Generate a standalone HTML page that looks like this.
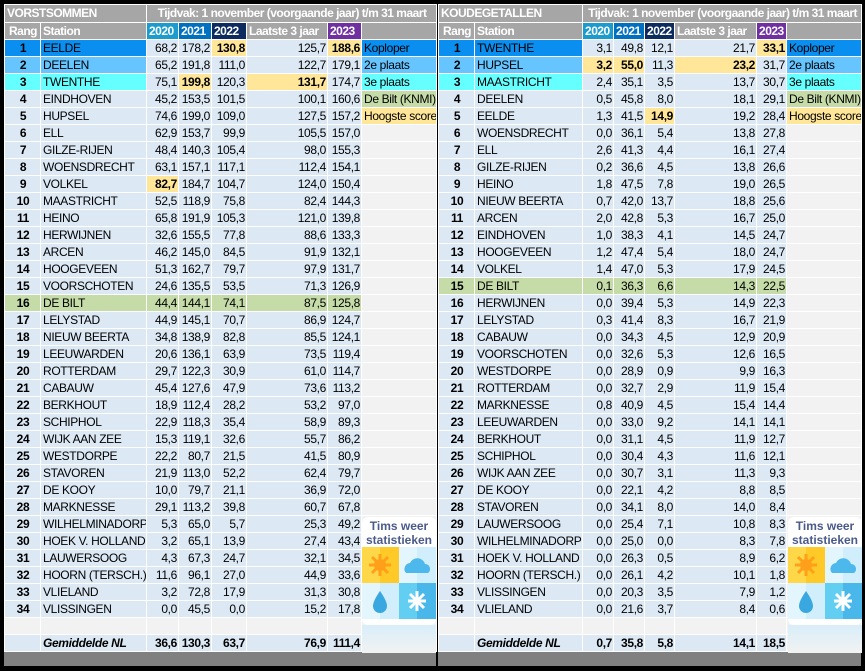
<!DOCTYPE html>
<html><head><meta charset="utf-8"><style>
*{margin:0;padding:0;box-sizing:border-box}
body{width:865px;height:671px;background:#000;position:relative;overflow:hidden;font-family:"Liberation Sans",Arial,sans-serif;font-size:12px;letter-spacing:-0.35px;color:#000}
.panel{position:absolute;top:4px;background:#808080;height:662px}
table{border-collapse:collapse;table-layout:fixed}
td{height:17px;border:1px solid #fff;background:#dce9f5;padding:0 1px 0 2px;white-space:nowrap;overflow:hidden;line-height:15px}
td.n{text-align:right}
td.r{text-align:center;font-weight:bold}
td.l{background:#f2f2f2;padding-left:2px}
tr.h1 td{background:#a6a6a6;color:#fff;font-weight:bold;height:18px;letter-spacing:-0.5px}
tr.h2 td{background:#a6a6a6;color:#fff;font-weight:bold;letter-spacing:-0.5px}
tr.h2 td.y0{background:#1b9ccc}
tr.h2 td.y1{background:#0070c0}
tr.h2 td.y2{background:#0d2b5e}
tr.h2 td.y3{background:#7030a0}
.b{background:#ffe699!important;font-weight:bold}
tr.k1 td.c{background:#0a8ef0}
tr.k2 td.c{background:#66c4ff}
tr.k3 td.c{background:#66ffff}
tr.g td.c{background:#c5dca8}
.lk1{background:#0a8ef0!important}.lk2{background:#66c4ff!important}.lk3{background:#66ffff!important}.lkn{background:#c5dca8!important}.lkh{background:#ffe699!important}
tr.gem td{font-weight:bold}
tr.gem td.s{font-style:italic}
.logo{position:absolute;width:74px;height:108px;background:#fff;border-radius:6px;overflow:hidden}
.logo .t{color:#4a5a8a;font-size:12px;font-weight:bold;text-align:center;line-height:14px;padding-top:2px;letter-spacing:0}
.tiles{position:absolute;left:0;top:30px;width:74px;height:72px}
.ref{position:absolute;width:74px;height:28px;overflow:hidden}
</style></head><body>

<div class="panel" style="left:4px;width:432px">
<table style="width:432px">
<colgroup><col style="width:36px"><col style="width:106px"><col style="width:32px"><col style="width:33px"><col style="width:35px"><col style="width:81px"><col style="width:34px"><col style="width:75px"></colgroup>
<tr class="h1"><td colspan="2">VORSTSOMMEN</td><td colspan="6" style="text-align:center">Tijdvak: 1 november (voorgaande jaar) t/m 31 maart</td></tr>
<tr class="h2"><td style="text-align:center">Rang</td><td>Station</td><td class="y0">2020</td><td class="y1">2021</td><td class="y2">2022</td><td>Laatste 3 jaar</td><td class="y3">2023</td><td></td></tr>
<tr class="k1"><td class="r c">1</td><td class="c">EELDE</td><td class="n">68,2</td><td class="n">178,2</td><td class="n b">130,8</td><td class="n">125,7</td><td class="n b">188,6</td><td class="l lk1">Koploper</td></tr>
<tr class="k2"><td class="r c">2</td><td class="c">DEELEN</td><td class="n">65,2</td><td class="n">191,8</td><td class="n">111,0</td><td class="n">122,7</td><td class="n">179,1</td><td class="l lk2">2e plaats</td></tr>
<tr class="k3"><td class="r c">3</td><td class="c">TWENTHE</td><td class="n">75,1</td><td class="n b">199,8</td><td class="n">120,3</td><td class="n b">131,7</td><td class="n">174,7</td><td class="l lk3">3e plaats</td></tr>
<tr><td class="r">4</td><td>EINDHOVEN</td><td class="n">45,2</td><td class="n">153,5</td><td class="n">101,5</td><td class="n">100,1</td><td class="n">160,6</td><td class="l lkn">De Bilt (KNMI)</td></tr>
<tr><td class="r">5</td><td>HUPSEL</td><td class="n">74,6</td><td class="n">199,0</td><td class="n">109,0</td><td class="n">127,5</td><td class="n">157,2</td><td class="l lkh">Hoogste score</td></tr>
<tr><td class="r">6</td><td>ELL</td><td class="n">62,9</td><td class="n">153,7</td><td class="n">99,9</td><td class="n">105,5</td><td class="n">157,0</td><td class="l"></td></tr>
<tr><td class="r">7</td><td>GILZE-RIJEN</td><td class="n">48,4</td><td class="n">140,3</td><td class="n">105,4</td><td class="n">98,0</td><td class="n">155,3</td><td class="l"></td></tr>
<tr><td class="r">8</td><td>WOENSDRECHT</td><td class="n">63,1</td><td class="n">157,1</td><td class="n">117,1</td><td class="n">112,4</td><td class="n">154,1</td><td class="l"></td></tr>
<tr><td class="r">9</td><td>VOLKEL</td><td class="n b">82,7</td><td class="n">184,7</td><td class="n">104,7</td><td class="n">124,0</td><td class="n">150,4</td><td class="l"></td></tr>
<tr><td class="r">10</td><td>MAASTRICHT</td><td class="n">52,5</td><td class="n">118,9</td><td class="n">75,8</td><td class="n">82,4</td><td class="n">144,3</td><td class="l"></td></tr>
<tr><td class="r">11</td><td>HEINO</td><td class="n">65,8</td><td class="n">191,9</td><td class="n">105,3</td><td class="n">121,0</td><td class="n">139,8</td><td class="l"></td></tr>
<tr><td class="r">12</td><td>HERWIJNEN</td><td class="n">32,6</td><td class="n">155,5</td><td class="n">77,8</td><td class="n">88,6</td><td class="n">133,3</td><td class="l"></td></tr>
<tr><td class="r">13</td><td>ARCEN</td><td class="n">46,2</td><td class="n">145,0</td><td class="n">84,5</td><td class="n">91,9</td><td class="n">132,1</td><td class="l"></td></tr>
<tr><td class="r">14</td><td>HOOGEVEEN</td><td class="n">51,3</td><td class="n">162,7</td><td class="n">79,7</td><td class="n">97,9</td><td class="n">131,7</td><td class="l"></td></tr>
<tr><td class="r">15</td><td>VOORSCHOTEN</td><td class="n">24,6</td><td class="n">135,5</td><td class="n">53,5</td><td class="n">71,3</td><td class="n">126,9</td><td class="l"></td></tr>
<tr class="g"><td class="r c">16</td><td class="c">DE BILT</td><td class="n c">44,4</td><td class="n c">144,1</td><td class="n c">74,1</td><td class="n c">87,5</td><td class="n c">125,8</td><td class="l"></td></tr>
<tr><td class="r">17</td><td>LELYSTAD</td><td class="n">44,9</td><td class="n">145,1</td><td class="n">70,7</td><td class="n">86,9</td><td class="n">124,7</td><td class="l"></td></tr>
<tr><td class="r">18</td><td>NIEUW BEERTA</td><td class="n">34,8</td><td class="n">138,9</td><td class="n">82,8</td><td class="n">85,5</td><td class="n">124,1</td><td class="l"></td></tr>
<tr><td class="r">19</td><td>LEEUWARDEN</td><td class="n">20,6</td><td class="n">136,1</td><td class="n">63,9</td><td class="n">73,5</td><td class="n">119,4</td><td class="l"></td></tr>
<tr><td class="r">20</td><td>ROTTERDAM</td><td class="n">29,7</td><td class="n">122,3</td><td class="n">30,9</td><td class="n">61,0</td><td class="n">114,7</td><td class="l"></td></tr>
<tr><td class="r">21</td><td>CABAUW</td><td class="n">45,4</td><td class="n">127,6</td><td class="n">47,9</td><td class="n">73,6</td><td class="n">113,2</td><td class="l"></td></tr>
<tr><td class="r">22</td><td>BERKHOUT</td><td class="n">18,9</td><td class="n">112,4</td><td class="n">28,2</td><td class="n">53,2</td><td class="n">97,0</td><td class="l"></td></tr>
<tr><td class="r">23</td><td>SCHIPHOL</td><td class="n">22,9</td><td class="n">118,3</td><td class="n">35,4</td><td class="n">58,9</td><td class="n">89,3</td><td class="l"></td></tr>
<tr><td class="r">24</td><td>WIJK AAN ZEE</td><td class="n">15,3</td><td class="n">119,1</td><td class="n">32,6</td><td class="n">55,7</td><td class="n">86,2</td><td class="l"></td></tr>
<tr><td class="r">25</td><td>WESTDORPE</td><td class="n">22,2</td><td class="n">80,7</td><td class="n">21,5</td><td class="n">41,5</td><td class="n">80,9</td><td class="l"></td></tr>
<tr><td class="r">26</td><td>STAVOREN</td><td class="n">21,9</td><td class="n">113,0</td><td class="n">52,2</td><td class="n">62,4</td><td class="n">79,7</td><td class="l"></td></tr>
<tr><td class="r">27</td><td>DE KOOY</td><td class="n">10,0</td><td class="n">79,7</td><td class="n">21,1</td><td class="n">36,9</td><td class="n">72,0</td><td class="l"></td></tr>
<tr><td class="r">28</td><td>MARKNESSE</td><td class="n">29,1</td><td class="n">113,2</td><td class="n">39,8</td><td class="n">60,7</td><td class="n">67,8</td><td class="l"></td></tr>
<tr><td class="r">29</td><td>WILHELMINADORP</td><td class="n">5,3</td><td class="n">65,0</td><td class="n">5,7</td><td class="n">25,3</td><td class="n">49,2</td><td class="l"></td></tr>
<tr><td class="r">30</td><td>HOEK V. HOLLAND</td><td class="n">3,2</td><td class="n">65,1</td><td class="n">13,9</td><td class="n">27,4</td><td class="n">43,4</td><td class="l"></td></tr>
<tr><td class="r">31</td><td>LAUWERSOOG</td><td class="n">4,3</td><td class="n">67,3</td><td class="n">24,7</td><td class="n">32,1</td><td class="n">34,5</td><td class="l"></td></tr>
<tr><td class="r">32</td><td>HOORN (TERSCH.)</td><td class="n">11,6</td><td class="n">96,1</td><td class="n">27,0</td><td class="n">44,9</td><td class="n">33,6</td><td class="l"></td></tr>
<tr><td class="r">33</td><td>VLIELAND</td><td class="n">3,2</td><td class="n">72,8</td><td class="n">17,9</td><td class="n">31,3</td><td class="n">30,8</td><td class="l"></td></tr>
<tr><td class="r">34</td><td>VLISSINGEN</td><td class="n">0,0</td><td class="n">45,5</td><td class="n">0,0</td><td class="n">15,2</td><td class="n">17,8</td><td class="l"></td></tr>
<tr><td class="l"></td><td class="l"></td><td class="l"></td><td class="l"></td><td class="l"></td><td class="l"></td><td class="l"></td><td class="l"></td></tr>
<tr class="gem"><td></td><td class="s">Gemiddelde NL</td><td class="n">36,6</td><td class="n">130,3</td><td class="n">63,7</td><td class="n">76,9</td><td class="n">111,4</td><td class="l"></td></tr>
</table>
</div>

<div class="panel" style="left:438px;width:423px">
<table style="width:423px">
<colgroup><col style="width:36px"><col style="width:108px"><col style="width:31px"><col style="width:31px"><col style="width:30px"><col style="width:82px"><col style="width:30px"><col style="width:75px"></colgroup>
<tr class="h1"><td colspan="2">KOUDEGETALLEN</td><td colspan="6" style="text-align:center">Tijdvak: 1 november (voorgaande jaar) t/m 31 maart</td></tr>
<tr class="h2"><td style="text-align:center">Rang</td><td>Station</td><td class="y0">2020</td><td class="y1">2021</td><td class="y2">2022</td><td>Laatste 3 jaar</td><td class="y3">2023</td><td></td></tr>
<tr class="k1"><td class="r c">1</td><td class="c">TWENTHE</td><td class="n">3,1</td><td class="n">49,8</td><td class="n">12,1</td><td class="n">21,7</td><td class="n b">33,1</td><td class="l lk1">Koploper</td></tr>
<tr class="k2"><td class="r c">2</td><td class="c">HUPSEL</td><td class="n b">3,2</td><td class="n b">55,0</td><td class="n">11,3</td><td class="n b">23,2</td><td class="n">31,7</td><td class="l lk2">2e plaats</td></tr>
<tr class="k3"><td class="r c">3</td><td class="c">MAASTRICHT</td><td class="n">2,4</td><td class="n">35,1</td><td class="n">3,5</td><td class="n">13,7</td><td class="n">30,7</td><td class="l lk3">3e plaats</td></tr>
<tr><td class="r">4</td><td>DEELEN</td><td class="n">0,5</td><td class="n">45,8</td><td class="n">8,0</td><td class="n">18,1</td><td class="n">29,1</td><td class="l lkn">De Bilt (KNMI)</td></tr>
<tr><td class="r">5</td><td>EELDE</td><td class="n">1,3</td><td class="n">41,5</td><td class="n b">14,9</td><td class="n">19,2</td><td class="n">28,4</td><td class="l lkh">Hoogste score</td></tr>
<tr><td class="r">6</td><td>WOENSDRECHT</td><td class="n">0,0</td><td class="n">36,1</td><td class="n">5,4</td><td class="n">13,8</td><td class="n">27,8</td><td class="l"></td></tr>
<tr><td class="r">7</td><td>ELL</td><td class="n">2,6</td><td class="n">41,3</td><td class="n">4,4</td><td class="n">16,1</td><td class="n">27,4</td><td class="l"></td></tr>
<tr><td class="r">8</td><td>GILZE-RIJEN</td><td class="n">0,2</td><td class="n">36,6</td><td class="n">4,5</td><td class="n">13,8</td><td class="n">26,6</td><td class="l"></td></tr>
<tr><td class="r">9</td><td>HEINO</td><td class="n">1,8</td><td class="n">47,5</td><td class="n">7,8</td><td class="n">19,0</td><td class="n">26,5</td><td class="l"></td></tr>
<tr><td class="r">10</td><td>NIEUW BEERTA</td><td class="n">0,7</td><td class="n">42,0</td><td class="n">13,7</td><td class="n">18,8</td><td class="n">25,6</td><td class="l"></td></tr>
<tr><td class="r">11</td><td>ARCEN</td><td class="n">2,0</td><td class="n">42,8</td><td class="n">5,3</td><td class="n">16,7</td><td class="n">25,0</td><td class="l"></td></tr>
<tr><td class="r">12</td><td>EINDHOVEN</td><td class="n">1,0</td><td class="n">38,3</td><td class="n">4,1</td><td class="n">14,5</td><td class="n">24,7</td><td class="l"></td></tr>
<tr><td class="r">13</td><td>HOOGEVEEN</td><td class="n">1,2</td><td class="n">47,4</td><td class="n">5,4</td><td class="n">18,0</td><td class="n">24,7</td><td class="l"></td></tr>
<tr><td class="r">14</td><td>VOLKEL</td><td class="n">1,4</td><td class="n">47,0</td><td class="n">5,3</td><td class="n">17,9</td><td class="n">24,5</td><td class="l"></td></tr>
<tr class="g"><td class="r c">15</td><td class="c">DE BILT</td><td class="n c">0,1</td><td class="n c">36,3</td><td class="n c">6,6</td><td class="n c">14,3</td><td class="n c">22,5</td><td class="l"></td></tr>
<tr><td class="r">16</td><td>HERWIJNEN</td><td class="n">0,0</td><td class="n">39,4</td><td class="n">5,3</td><td class="n">14,9</td><td class="n">22,3</td><td class="l"></td></tr>
<tr><td class="r">17</td><td>LELYSTAD</td><td class="n">0,3</td><td class="n">41,4</td><td class="n">8,3</td><td class="n">16,7</td><td class="n">21,9</td><td class="l"></td></tr>
<tr><td class="r">18</td><td>CABAUW</td><td class="n">0,0</td><td class="n">34,3</td><td class="n">4,5</td><td class="n">12,9</td><td class="n">20,9</td><td class="l"></td></tr>
<tr><td class="r">19</td><td>VOORSCHOTEN</td><td class="n">0,0</td><td class="n">32,6</td><td class="n">5,3</td><td class="n">12,6</td><td class="n">16,5</td><td class="l"></td></tr>
<tr><td class="r">20</td><td>WESTDORPE</td><td class="n">0,0</td><td class="n">28,9</td><td class="n">0,9</td><td class="n">9,9</td><td class="n">16,3</td><td class="l"></td></tr>
<tr><td class="r">21</td><td>ROTTERDAM</td><td class="n">0,0</td><td class="n">32,7</td><td class="n">2,9</td><td class="n">11,9</td><td class="n">15,4</td><td class="l"></td></tr>
<tr><td class="r">22</td><td>MARKNESSE</td><td class="n">0,8</td><td class="n">40,9</td><td class="n">4,5</td><td class="n">15,4</td><td class="n">14,4</td><td class="l"></td></tr>
<tr><td class="r">23</td><td>LEEUWARDEN</td><td class="n">0,0</td><td class="n">33,0</td><td class="n">9,2</td><td class="n">14,1</td><td class="n">14,1</td><td class="l"></td></tr>
<tr><td class="r">24</td><td>BERKHOUT</td><td class="n">0,0</td><td class="n">31,1</td><td class="n">4,5</td><td class="n">11,9</td><td class="n">12,7</td><td class="l"></td></tr>
<tr><td class="r">25</td><td>SCHIPHOL</td><td class="n">0,0</td><td class="n">30,4</td><td class="n">4,3</td><td class="n">11,6</td><td class="n">12,1</td><td class="l"></td></tr>
<tr><td class="r">26</td><td>WIJK AAN ZEE</td><td class="n">0,0</td><td class="n">30,7</td><td class="n">3,1</td><td class="n">11,3</td><td class="n">9,3</td><td class="l"></td></tr>
<tr><td class="r">27</td><td>DE KOOY</td><td class="n">0,0</td><td class="n">22,1</td><td class="n">4,2</td><td class="n">8,8</td><td class="n">8,5</td><td class="l"></td></tr>
<tr><td class="r">28</td><td>STAVOREN</td><td class="n">0,0</td><td class="n">34,1</td><td class="n">8,0</td><td class="n">14,0</td><td class="n">8,4</td><td class="l"></td></tr>
<tr><td class="r">29</td><td>LAUWERSOOG</td><td class="n">0,0</td><td class="n">25,4</td><td class="n">7,1</td><td class="n">10,8</td><td class="n">8,3</td><td class="l"></td></tr>
<tr><td class="r">30</td><td>WILHELMINADORP</td><td class="n">0,0</td><td class="n">25,0</td><td class="n">0,0</td><td class="n">8,3</td><td class="n">7,8</td><td class="l"></td></tr>
<tr><td class="r">31</td><td>HOEK V. HOLLAND</td><td class="n">0,0</td><td class="n">26,3</td><td class="n">0,5</td><td class="n">8,9</td><td class="n">6,2</td><td class="l"></td></tr>
<tr><td class="r">32</td><td>HOORN (TERSCH.)</td><td class="n">0,0</td><td class="n">26,1</td><td class="n">4,2</td><td class="n">10,1</td><td class="n">1,8</td><td class="l"></td></tr>
<tr><td class="r">33</td><td>VLISSINGEN</td><td class="n">0,0</td><td class="n">20,3</td><td class="n">3,5</td><td class="n">7,9</td><td class="n">1,2</td><td class="l"></td></tr>
<tr><td class="r">34</td><td>VLIELAND</td><td class="n">0,0</td><td class="n">21,6</td><td class="n">3,7</td><td class="n">8,4</td><td class="n">0,6</td><td class="l"></td></tr>
<tr><td class="l"></td><td class="l"></td><td class="l"></td><td class="l"></td><td class="l"></td><td class="l"></td><td class="l"></td><td class="l"></td></tr>
<tr class="gem"><td></td><td class="s">Gemiddelde NL</td><td class="n">0,7</td><td class="n">35,8</td><td class="n">5,8</td><td class="n">14,1</td><td class="n">18,5</td><td class="l"></td></tr>
</table>
</div>

<div class="logo" style="left:362px;top:517px">
<div class="t">Tims weer<br>statistieken</div>
<svg class="tiles" viewBox="0 0 74 72" width="74" height="72">
<rect x="0" y="0" width="37" height="36" fill="#ffd84a"/><rect x="18" y="0" width="19" height="36" fill="#ffc928"/>
<circle cx="18" cy="18" r="6" fill="#ff9f1a"/><g stroke="#ff9f1a" stroke-width="3"><line x1="18" y1="7" x2="18" y2="29"/><line x1="7" y1="18" x2="29" y2="18"/><line x1="10" y1="10" x2="26" y2="26"/><line x1="26" y1="10" x2="10" y2="26"/></g>
<rect x="37" y="0" width="37" height="36" fill="#e3f5fd"/><rect x="55" y="0" width="19" height="36" fill="#d0eefb"/>
<path d="M44 26 a6 6 0 0 1 4-10 a8 8 0 0 1 15 1 a5 5 0 0 1 3 9 z" fill="#4cb8ec"/>
<rect x="0" y="36" width="37" height="36" fill="#e3f5fd"/><rect x="18" y="36" width="19" height="36" fill="#d0eefb"/>
<path d="M18 44 q7 10 7 15 a7 7 0 0 1 -14 0 q0-5 7-15z" fill="#3aa8e0"/>
<rect x="37" y="36" width="37" height="36" fill="#62cef2"/><rect x="55" y="36" width="19" height="36" fill="#4ab7ea"/>
<g stroke="#fff" stroke-width="3"><line x1="55" y1="44" x2="55" y2="64"/><line x1="46" y1="54" x2="64" y2="54"/><line x1="48" y1="47" x2="62" y2="61"/><line x1="62" y1="47" x2="48" y2="61"/></g>
</svg>
</div>
<div class="logo" style="left:788px;top:517px">
<div class="t">Tims weer<br>statistieken</div>
<svg class="tiles" viewBox="0 0 74 72" width="74" height="72">
<rect x="0" y="0" width="37" height="36" fill="#ffd84a"/><rect x="18" y="0" width="19" height="36" fill="#ffc928"/>
<circle cx="18" cy="18" r="6" fill="#ff9f1a"/><g stroke="#ff9f1a" stroke-width="3"><line x1="18" y1="7" x2="18" y2="29"/><line x1="7" y1="18" x2="29" y2="18"/><line x1="10" y1="10" x2="26" y2="26"/><line x1="26" y1="10" x2="10" y2="26"/></g>
<rect x="37" y="0" width="37" height="36" fill="#e3f5fd"/><rect x="55" y="0" width="19" height="36" fill="#d0eefb"/>
<path d="M44 26 a6 6 0 0 1 4-10 a8 8 0 0 1 15 1 a5 5 0 0 1 3 9 z" fill="#4cb8ec"/>
<rect x="0" y="36" width="37" height="36" fill="#e3f5fd"/><rect x="18" y="36" width="19" height="36" fill="#d0eefb"/>
<path d="M18 44 q7 10 7 15 a7 7 0 0 1 -14 0 q0-5 7-15z" fill="#3aa8e0"/>
<rect x="37" y="36" width="37" height="36" fill="#62cef2"/><rect x="55" y="36" width="19" height="36" fill="#4ab7ea"/>
<g stroke="#fff" stroke-width="3"><line x1="55" y1="44" x2="55" y2="64"/><line x1="46" y1="54" x2="64" y2="54"/><line x1="48" y1="47" x2="62" y2="61"/><line x1="62" y1="47" x2="48" y2="61"/></g>
</svg>
</div>
<div class="ref" style="left:362px;top:625px;background:linear-gradient(#d8eef9,#f2f2f2)"></div>
<div class="ref" style="left:788px;top:625px;background:linear-gradient(#d8eef9,#f2f2f2)"></div>
</body></html>
